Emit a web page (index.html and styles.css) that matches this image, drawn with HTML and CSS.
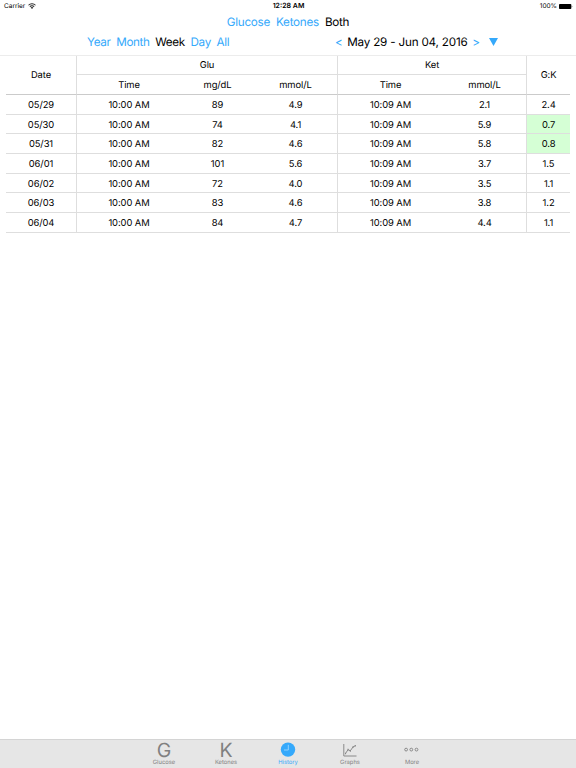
FILE: index.html
```html
<!DOCTYPE html>
<html lang="en">
<head>
  <meta charset="utf-8">
  <title>History</title>
  <link rel="stylesheet" href="styles.css">
</head>
<body>
  <header>
    <div class="statusBar">
      <div class="carrier">
        <span>Carrier</span>
        <svg width="8" height="6" viewBox="0 0 16 12">
          <path d="M1 4.5a10 10 0 0 1 14 0M3.7 7.2a6 6 0 0 1 8.6 0" fill="none" stroke="#222" stroke-width="2.1"/>
          <path d="M8 12L5.3 9.2a3.8 3.8 0 0 1 5.4 0z" fill="#222"/>
        </svg>
      </div>
      <div class="clock">12:28 AM</div>
      <div class="battery">
        <span>100%</span>
        <svg width="14" height="5" viewBox="0 0 14 5">
          <rect width="12.3" height="5" rx="0.8" fill="#000"/>
          <path d="M12.8 1.6q1 .9 0 1.8z" fill="#000"/>
        </svg>
      </div>
    </div>
    <nav class="typeNav">
      <a>Glucose</a>
      <a>Ketones</a>
      <a class="selected">Both</a>
    </nav>
    <div class="rangeBar">
      <nav class="periodNav">
        <a>Year</a>
        <a>Month</a>
        <a class="selected">Week</a>
        <a>Day</a>
        <a>All</a>
      </nav>
      <div class="dateNav">
        <a>&lt;</a>
        <span>May 29 - Jun 04, 2016</span>
        <a>&gt;</a>
        <svg class="arrow" width="9" height="8" viewBox="0 0 9 8"><path d="M0 0h9L4.5 8z" fill="#35a9fb"/></svg>
      </div>
    </div>
  </header>

  <main>
    <table>
      <colgroup>
        <col class="colDate">
        <col class="colTime">
        <col class="colMg">
        <col class="colMmol">
        <col class="colKetTime">
        <col class="colKet">
        <col class="colRatio">
      </colgroup>
      <thead>
        <tr>
          <th rowspan="2" class="edge bottom">Date</th>
          <th colspan="3" class="edge">Glu</th>
          <th colspan="2" class="edge">Ket</th>
          <th rowspan="2" class="bottom">G:K</th>
        </tr>
        <tr>
          <th class="bottom">Time</th>
          <th class="bottom">mg/dL</th>
          <th class="edge bottom">mmol/L</th>
          <th class="bottom">Time</th>
          <th class="edge bottom">mmol/L</th>
        </tr>
      </thead>
      <tbody>
        <tr><td class="edge">05/29</td><td>10:00 AM</td><td>89</td><td class="edge">4.9</td><td>10:09 AM</td><td class="edge">2.1</td><td>2.4</td></tr>
        <tr class="short"><td class="edge">05/30</td><td>10:00 AM</td><td>74</td><td class="edge">4.1</td><td>10:09 AM</td><td class="edge">5.9</td><td class="good">0.7</td></tr>
        <tr><td class="edge">05/31</td><td>10:00 AM</td><td>82</td><td class="edge">4.6</td><td>10:09 AM</td><td class="edge">5.8</td><td class="good">0.8</td></tr>
        <tr><td class="edge">06/01</td><td>10:00 AM</td><td>101</td><td class="edge">5.6</td><td>10:09 AM</td><td class="edge">3.7</td><td>1.5</td></tr>
        <tr class="short"><td class="edge">06/02</td><td>10:00 AM</td><td>72</td><td class="edge">4.0</td><td>10:09 AM</td><td class="edge">3.5</td><td>1.1</td></tr>
        <tr><td class="edge">06/03</td><td>10:00 AM</td><td>83</td><td class="edge">4.6</td><td>10:09 AM</td><td class="edge">3.8</td><td>1.2</td></tr>
        <tr><td class="edge">06/04</td><td>10:00 AM</td><td>84</td><td class="edge">4.7</td><td>10:09 AM</td><td class="edge">4.4</td><td>1.1</td></tr>
      </tbody>
    </table>
  </main>

  <footer class="tabBar">
    <a class="tab">
      <span class="letter">G</span>
      <span>Glucose</span>
    </a>
    <a class="tab">
      <span class="letter">K</span>
      <span>Ketones</span>
    </a>
    <a class="tab active">
      <svg width="16" height="16" viewBox="0 0 16 16">
        <circle cx="8" cy="7.6" r="7.2" fill="#35a9fb"/>
        <path d="M8.3 2.8v5.2H4" fill="none" stroke="#9bd6ff" stroke-width="0.9"/>
      </svg>
      <span>History</span>
    </a>
    <a class="tab">
      <svg width="16" height="16" viewBox="0 0 16 16" fill="none" stroke="#808080" stroke-width="0.9">
        <path d="M1.8 2v12H14.5"/>
        <path d="M3.5 11.5L6 7.7l2.3 1.1L11 5l2.2-1.2"/>
        <path d="M3.1 11.5h1M5.5 7.6h1M7.8 9h1M10.5 5h1M12.8 3.7h1" stroke-width="1.5"/>
      </svg>
      <span>Graphs</span>
    </a>
    <a class="tab">
      <svg width="16" height="16" viewBox="0 0 16 16" fill="none" stroke="#808080" stroke-width="0.9">
        <circle cx="2.1" cy="7.6" r="1.4"/>
        <circle cx="7.3" cy="7.6" r="1.4"/>
        <circle cx="12.5" cy="7.6" r="1.4"/>
      </svg>
      <span>More</span>
    </a>
  </footer>
</body>
</html>
```
FILE: styles.css
```css
body {
  display: flex;
  flex-direction: column;
  height: 100vh;
  margin: 0;
  overflow: hidden;
  background-color: #fff;
  color: #000;
  font-family: Inter, sans-serif;
  text-rendering: geometricPrecision;
}

header {
  height: 55px;
  border-bottom: 1px solid #ececec;
}

a {
  color: #35a9fb;
}

.selected {
  color: #000;
}

.statusBar {
  display: grid;
  grid-template-columns: 1fr auto 1fr;
  height: 12px;
  line-height: 12px;
  padding: 0 3px 0 4px;
  font-size: 6.5px;
}

.carrier,
.battery {
  display: flex;
  align-items: center;
  gap: 3px;
}

.battery {
  justify-content: flex-end;
  gap: 2px;
}

.clock {
  font-weight: 600;
  font-size: 7px;
}

.typeNav {
  display: flex;
  justify-content: center;
  gap: 6px;
  height: 20px;
  line-height: 20px;
  font-size: 11.7px;
  letter-spacing: -0.27px;
}

.rangeBar {
  display: flex;
  height: 20px;
  line-height: 20px;
  font-size: 11.7px;
  letter-spacing: -0.2px;
}

.periodNav {
  display: flex;
  gap: 5.6px;
  width: 248px;
  padding-left: 87px;
  letter-spacing: -0.34px;
}

.dateNav {
  display: flex;
  gap: 4.6px;
}

.arrow {
  margin: 6px 0 0 5px;
}

main {
  flex: 1;
  padding: 0 6px;
}

table {
  width: 564px;
  table-layout: fixed;
  border-collapse: separate;
  border-spacing: 0;
  font-size: 9.4px;
  line-height: 12px;
  letter-spacing: -0.08px;
}

.colDate { width: 71px; }
.colTime { width: 104px; }
.colMg { width: 73px; }
.colMmol { width: 84px; }
.colKetTime { width: 105px; }
.colKet { width: 84px; }
.colRatio { width: 43px; }

th,
td {
  box-sizing: border-box;
  height: 20px;
  padding: 2px 0 0;
  border-bottom: 1px solid #dedede;
  font-weight: normal;
  text-align: center;
}

thead tr:first-child th {
  height: 19px;
}

thead tr:first-child th.bottom {
  height: 39px;
}

.short td {
  height: 19px;
  padding-top: 3px;
}

th.bottom {
  border-bottom-color: #cbcbcb;
}

.edge {
  border-right: 1px solid #dedede;
}

.good {
  background-color: #d5ffd5;
}

.tabBar {
  display: flex;
  justify-content: center;
  box-sizing: border-box;
  height: 29px;
  border-top: 1px solid #d4d4d4;
  background-color: #e6e6e6;
}

.tab {
  display: flex;
  flex-direction: column;
  align-items: center;
  width: 62px;
  padding-top: 2px;
  color: #808080;
  font-size: 5.8px;
  line-height: 10px;
}

.tab svg,
.letter {
  flex-shrink: 0;
}

.tab.active {
  color: #35a9fb;
}

.letter {
  height: 16px;
  line-height: 16px;
  font-size: 19.5px;
}
```
